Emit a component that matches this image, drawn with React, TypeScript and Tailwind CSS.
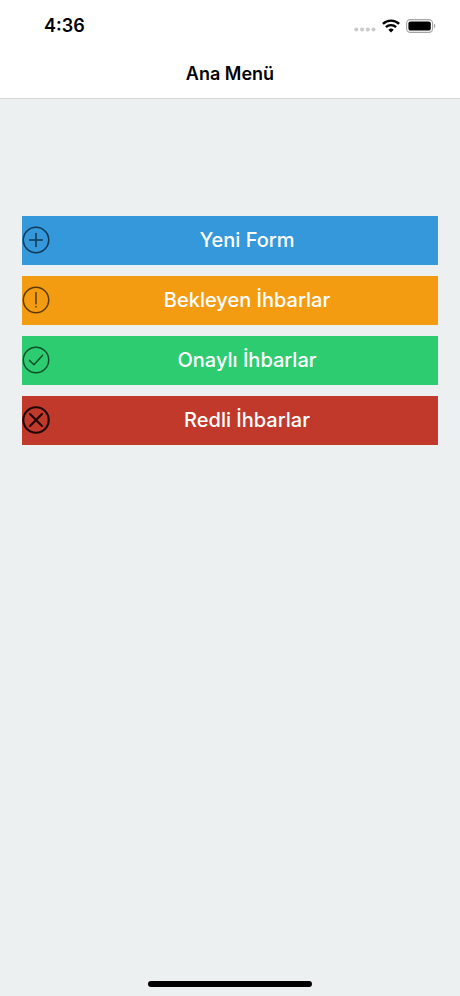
import type { ReactNode } from 'react';

type MenuItem = {
  label: string;
  background: string;
  iconColor: string;
  strokeWidth: number;
  glyph: ReactNode;
};

const items: MenuItem[] = [
  {
    label: 'Yeni Form',
    background: 'bg-[#3498db]',
    iconColor: 'text-[#123a58]',
    strokeWidth: 1.6,
    glyph: <path d="M14 7.6v12.8M7.6 14h12.8" />,
  },
  {
    label: 'Bekleyen İhbarlar',
    background: 'bg-[#f39c12]',
    iconColor: 'text-[#5c3a08]',
    strokeWidth: 1.5,
    glyph: <path d="M14 6.5v11.2M14 20.4v.6" />,
  },
  {
    label: 'Onaylı İhbarlar',
    background: 'bg-[#2ecc71]',
    iconColor: 'text-[#0d4f2a]',
    strokeWidth: 1.5,
    glyph: <path d="M7.4 14.4l4.6 4.4 8.6-9.6" />,
  },
  {
    label: 'Redli İhbarlar',
    background: 'bg-[#c0392b]',
    iconColor: 'text-[#1c0604]',
    strokeWidth: 2.1,
    glyph: <path d="M8 8l12 12M20 8L8 20" />,
  },
];

function StatusBar() {
  return (
    <div className="flex h-12 items-center justify-between pt-1 pr-6 pl-11">
      <span className="text-lg font-semibold">4:36</span>
      <div className="flex items-center gap-1.5">
        <svg width="22" height="14" viewBox="0 0 22 14" fill="#c9c9cb" aria-hidden="true">
          <circle cx="2.3" cy="10.6" r="2" />
          <circle cx="8.1" cy="10.6" r="2" />
          <circle cx="13.8" cy="10.6" r="2" />
          <circle cx="19.5" cy="10.6" r="2" />
        </svg>
        <svg width="18" height="14" viewBox="0 0 18 14" fill="none" stroke="#000" strokeWidth="2.4" aria-hidden="true">
          <path d="M0.9 4.9a11.6 11.6 0 0 1 16.2 0" />
          <path d="M3.9 8.2a7.3 7.3 0 0 1 10.2 0" />
          <path d="M9 13.4L6.3 10.7a3.9 3.9 0 0 1 5.4 0z" fill="#000" stroke="none" />
        </svg>
        <svg width="30" height="14" viewBox="0 0 30 14" aria-hidden="true">
          <rect x="0.6" y="0.6" width="26" height="12.8" rx="3.8" fill="none" stroke="#a3a3a5" strokeWidth="1.1" />
          <rect x="2.4" y="2.4" width="22.4" height="9.2" rx="2.2" fill="#000" />
          <path d="M28 4.8v4.4c1.8-.6 1.8-3.8 0-4.4z" fill="#a3a3a5" />
        </svg>
      </div>
    </div>
  );
}

function MenuButton({ label, background, iconColor, strokeWidth, glyph }: MenuItem) {
  return (
    <button type="button" className={`flex h-[49px] w-full items-center gap-1.5 pb-px text-white ${background}`}>
      <svg
        width="28"
        height="28"
        viewBox="0 0 28 28"
        fill="none"
        stroke="currentColor"
        strokeWidth={strokeWidth}
        strokeLinecap="round"
        strokeLinejoin="round"
        className={`shrink-0 ${iconColor}`}
        aria-hidden="true"
      >
        <circle cx="14" cy="14" r="12.7" />
        {glyph}
      </svg>
      <span className="flex-1 text-center text-xl font-medium">{label}</span>
    </button>
  );
}

export default function App() {
  return (
    <div className="flex min-h-screen flex-col bg-[#ecf0f1] font-['Inter','Liberation_Sans',sans-serif] text-black">
      <header className="border-b border-[#d3d6d8] bg-white">
        <StatusBar />
        <h1 className="flex h-[50px] items-center justify-center pt-0.5 text-lg font-semibold">Ana Menü</h1>
      </header>
      <main className="flex flex-1 flex-col px-[22px] pt-[117px]">
        <nav className="flex flex-col gap-[11px]">
          {items.map((item) => (
            <MenuButton key={item.label} {...item} />
          ))}
        </nav>
      </main>
      <footer className="flex justify-center pb-[9px]">
        <div className="h-1.5 w-[164px] rounded-full bg-black" />
      </footer>
    </div>
  );
}
